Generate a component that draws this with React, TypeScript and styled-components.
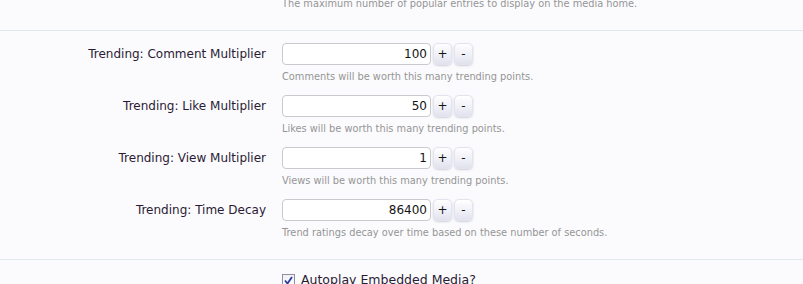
import React from "react"
import styled, { createGlobalStyle } from "styled-components"

const GlobalStyle = createGlobalStyle`
  html, body {
    margin: 0;
    padding: 0;
    background: #fbfbfe;
    overflow: hidden;
  }
`

const Page = styled.div`
  width: 803px;
  height: 284px;
  overflow: hidden;
  background: #fbfbfe;
  font-family: Tahoma, "DejaVu Sans", sans-serif;
`

const Section = styled.div<{ $top?: boolean; $pad?: string }>`
  border-top: ${(p) => (p.$top ? "none" : "1px solid #dde9ec")};
  padding: ${(p) => p.$pad ?? "0"};
  margin-top: ${(p) => (p.$top ? "-3px" : "0")};
`

const Row = styled.div`
  display: grid;
  grid-template-columns: 266px 1fr;
  column-gap: 16px;
  margin-bottom: 11px;
  &:last-child {
    margin-bottom: 0;
  }
`

const Label = styled.div`
  text-align: right;
  font-size: 12px;
  line-height: 22px;
  color: #2b1a33;
  white-space: nowrap;
`

const Controls = styled.div`
  display: flex;
  flex-direction: column;
  gap: 5px;
`

const SpinBox = styled.div`
  display: flex;
  align-items: center;
  gap: 2px;
`

const NumberInput = styled.input`
  box-sizing: border-box;
  width: 149px;
  height: 22px;
  border: 1px solid #c9c9cf;
  border-radius: 4px;
  background: #ffffff;
  text-align: right;
  font-family: Tahoma, "DejaVu Sans", sans-serif;
  font-size: 12px;
  color: #141414;
  padding: 0 3px 0 4px;
  margin: 0;
  outline: none;
`

const SpinButton = styled.button`
  box-sizing: border-box;
  width: 19px;
  height: 22px;
  margin: 0;
  padding: 0 0 1px;
  border: 1px solid #e3e3ee;
  border-radius: 5px;
  background: linear-gradient(to bottom, #ffffff 0%, #eeeef7 60%, #e2e2ee 100%);
  box-shadow: 0 1px 2px rgba(80, 80, 120, 0.25);
  font-family: Tahoma, "DejaVu Sans", sans-serif;
  font-size: 12px;
  color: #141414;
  line-height: 20px;
`

const Explain = styled.div`
  font-size: 9.8px;
  line-height: 14px;
  color: #959595;
  white-space: nowrap;
`

const CheckRow = styled.label`
  display: flex;
  align-items: center;
  gap: 6px;
  padding-left: 282px;
  font-size: 12.5px;
  line-height: 16px;
  color: #2b1a33;
`

const CheckBox = styled.span`
  box-sizing: border-box;
  width: 13px;
  height: 13px;
  border: 1px solid #8e8fa6;
  background: linear-gradient(to bottom, #f0f0f5, #ffffff);
  display: inline-flex;
  align-items: center;
  justify-content: center;
`

interface SettingProps {
  label: string
  value: string
  explain: string
}

const NumberSetting = ({ label, value, explain }: SettingProps) => (
  <Row>
    <Label>{label}</Label>
    <Controls>
      <SpinBox>
        <NumberInput type="text" defaultValue={value} />
        <SpinButton>+</SpinButton>
        <SpinButton>-</SpinButton>
      </SpinBox>
      <Explain>{explain}</Explain>
    </Controls>
  </Row>
)

const settings: SettingProps[] = [
  {
    label: "Trending: Comment Multiplier",
    value: "100",
    explain: "Comments will be worth this many trending points.",
  },
  {
    label: "Trending: Like Multiplier",
    value: "50",
    explain: "Likes will be worth this many trending points.",
  },
  {
    label: "Trending: View Multiplier",
    value: "1",
    explain: "Views will be worth this many trending points.",
  },
  {
    label: "Trending: Time Decay",
    value: "86400",
    explain: "Trend ratings decay over time based on these number of seconds.",
  },
]

const App = () => {
  return (
    <>
      <GlobalStyle />
      <Page>
        <Section $top $pad="0 0 19px">
          <Row>
            <div />
            <Explain>The maximum number of popular entries to display on the media home.</Explain>
          </Row>
        </Section>
        <Section $pad="12px 0 19px">
          {settings.map((s) => (
            <NumberSetting key={s.label} {...s} />
          ))}
        </Section>
        <Section $pad="12px 0 0">
          <CheckRow>
            <CheckBox>
              <svg width="9" height="9" viewBox="0 0 9 9">
                <path d="M1 4.5 L3.5 7.5 L8 1" fill="none" stroke="#2a3c9a" strokeWidth="1.8" />
              </svg>
            </CheckBox>
            Autoplay Embedded Media?
          </CheckRow>
        </Section>
      </Page>
    </>
  )
}

export default App
